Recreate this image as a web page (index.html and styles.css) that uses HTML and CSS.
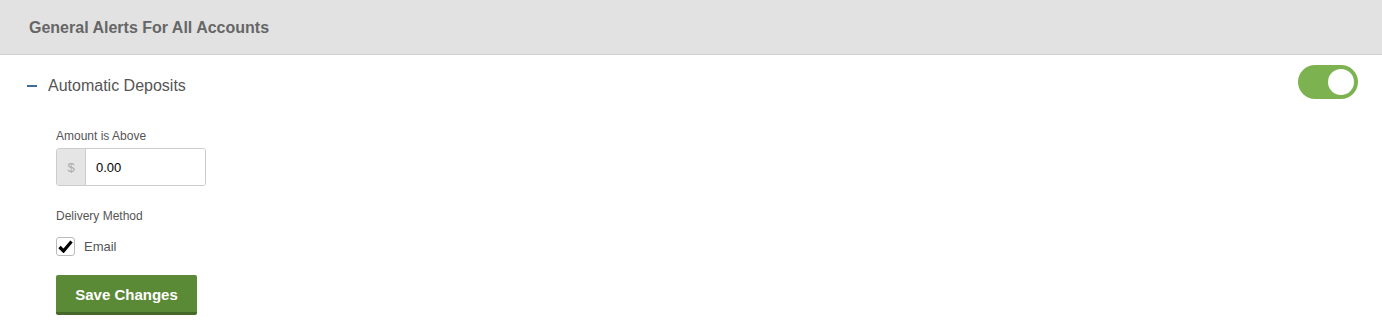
FILE: index.html
```html
<!DOCTYPE html>
<html lang="en">
<head>
    <meta charset="UTF-8">
    <title>Alerts</title>
    <link rel="stylesheet" href="styles.css">
</head>
<body>
    <div class="panel-header">General Alerts For All Accounts</div>
    <div class="alert-row">
        <span class="collapse-icon"></span>
        <span class="alert-title">Automatic Deposits</span>
        <span class="toggle on"><span class="knob"></span></span>
    </div>
    <div class="alert-body">
        <label class="field-label" for="amount">Amount is Above</label>
        <div class="input-group">
            <span class="addon">$</span>
            <input type="text" id="amount" value="0.00">
        </div>
        <div class="field-label delivery">Delivery Method</div>
        <label class="check">
            <span class="box">
                <svg width="15" height="13" viewBox="0 0 15 13"><path d="M1.5 7 L5.5 11 L13.5 1.5" fill="none" stroke="#000" stroke-width="3.2"/></svg>
            </span>
            Email
        </label>
        <button class="btn-save">Save Changes</button>
    </div>
</body>
</html>
```

FILE: styles.css
```css
body {
    margin: 0;
    font-family: "Liberation Sans", Arial, sans-serif;
    color: #555;
    background: #fff;
}

.panel-header {
    height: 54px;
    line-height: 56px;
    background-color: #e2e2e2;
    border-bottom: 1px solid #cfcfcf;
    padding-left: 29px;
    font-size: 16px;
    font-weight: bold;
    color: #666;
    box-sizing: border-box;
    height: 55px;
}

.alert-row {
    display: flex;
    align-items: center;
    height: 60px;
    padding: 2px 24px 0 27px;
    box-sizing: border-box;
}

.collapse-icon {
    width: 10px;
    height: 2px;
    background-color: #3d6c99;
    margin-right: 11px;
}

.alert-title {
    font-size: 16px;
    color: #555;
    flex: 1;
}

.toggle {
    align-self: flex-start;
    margin-top: 8px;
    width: 60px;
    height: 34px;
    border-radius: 17px;
    background-color: #7cb24f;
    display: flex;
    align-items: center;
    justify-content: flex-end;
    padding: 0 4px;
    box-sizing: border-box;
}

.knob {
    width: 26px;
    height: 26px;
    border-radius: 50%;
    background: #fff;
}

.alert-body {
    padding-left: 56px;
    padding-top: 14px;
}

.field-label {
    display: block;
    font-size: 12px;
    color: #555;
    margin-bottom: 5px;
}

.input-group {
    display: flex;
    width: 150px;
    height: 38px;
    border: 1px solid #ccc;
    border-radius: 3px;
    box-sizing: border-box;
    overflow: hidden;
}

.addon {
    width: 28px;
    background-color: #e5e5e5;
    border-right: 1px solid #ccc;
    color: #aaa;
    font-size: 13px;
    display: flex;
    align-items: center;
    justify-content: center;
}

.input-group input {
    border: none;
    outline: none;
    flex: 1;
    min-width: 0;
    padding-left: 10px;
    font-family: "Liberation Sans", Arial, sans-serif;
    font-size: 13px;
    color: #000;
}

.delivery {
    margin-top: 23px;
    margin-bottom: 14px;
}

.check {
    display: flex;
    align-items: center;
    font-size: 13px;
    color: #555;
}

.box {
    width: 19px;
    height: 19px;
    border: 1px solid #bbb;
    border-radius: 3px;
    box-sizing: border-box;
    display: flex;
    align-items: center;
    justify-content: center;
    margin-right: 9px;
}

.btn-save {
    margin-top: 19px;
    width: 141px;
    height: 40px;
    padding-top: 2px;
    background-color: #5b8a37;
    border: none;
    border-bottom: 3px solid #46692a;
    border-radius: 2px;
    color: #fff;
    font-family: "Liberation Sans", Arial, sans-serif;
    font-size: 15px;
    font-weight: bold;
    cursor: pointer;
}
```
